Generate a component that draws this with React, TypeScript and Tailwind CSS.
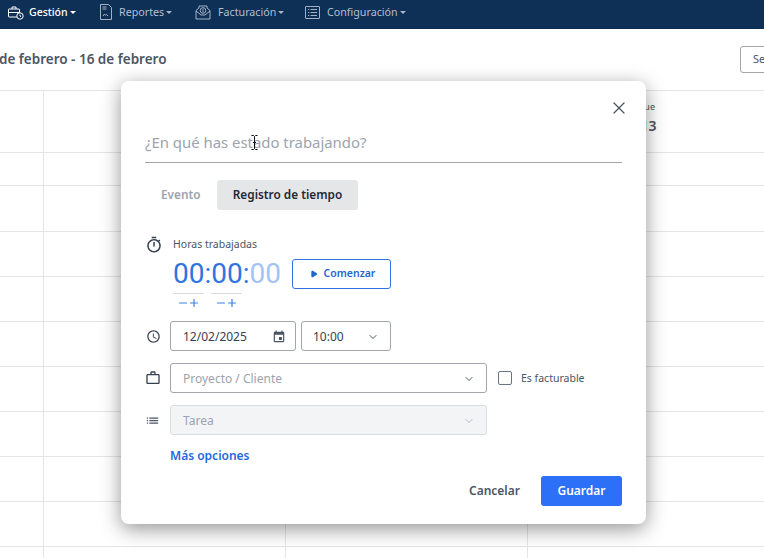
import React from 'react';
import { X, Play, ChevronDown, Plus, Minus } from 'lucide-react';
import { MdOutlineTimer, MdAccessTime, MdWorkOutline, MdList, MdEvent } from 'react-icons/md';

const FONT = "font-['Noto_Sans','Open_Sans',sans-serif]";
const ROW_HEIGHTS = [33, 46, 45, 45, 45, 45, 45, 45, 45, 12];

function NavCaret({ light }: { light?: boolean }) {
  return (
    <span
      className={`ml-[2px] h-0 w-0 border-x-[3px] border-t-[3px] border-x-transparent ${light ? 'border-t-white' : 'border-t-[#a9b6c8]'}`}
    />
  );
}

function GestionIcon() {
  return (
    <svg width="16" height="14" viewBox="0 0 16 14" fill="none" stroke="currentColor" strokeWidth="1">
      <rect x="0.5" y="3" width="11" height="8" rx="0.5" />
      <path d="M4 3V1h4v2M0.5 6.5h11" />
      <circle cx="12" cy="10" r="3.2" fill="#0e2f56" />
      <path d="M12 8.5V10l1 .7" />
    </svg>
  );
}

function ReportIcon() {
  return (
    <svg width="12" height="16" viewBox="0 0 12 16" fill="none" stroke="currentColor" strokeWidth="0.9">
      <path d="M.5.5h8l3 3v12H.5z" />
      <path d="M2.5 3h4M2.5 5h4M3 12l1.5-2 1 1.2 1-.6 1.5 1.4" />
    </svg>
  );
}

function BillingIcon() {
  return (
    <svg width="16" height="16" viewBox="0 0 16 16" fill="none" stroke="currentColor" strokeWidth="0.9">
      <path d="M1 6.5 4 4V2h8v2l3 2.5V15H1z" />
      <path d="M1 7l5 4h4l5-4" />
      <circle cx="8" cy="6.5" r="2.8" />
      <path d="M8 4.8v3.4" />
    </svg>
  );
}

function ConfigIcon() {
  return (
    <svg width="15" height="13" viewBox="0 0 15 13" fill="none" stroke="currentColor" strokeWidth="0.9">
      <rect x="0.5" y="0.5" width="14" height="12" rx="0.5" />
      <path d="M3 3.5h1.2M3 6.5h1.2M3 9.5h1.2M5.5 3.5H12M5.5 6.5H12M5.5 9.5H12" />
    </svg>
  );
}

function NavItem({ icon, label, active, className }: { icon: React.ReactNode; label: string; active?: boolean; className: string }) {
  return (
    <div className={`flex items-center ${active ? 'font-medium text-white' : 'text-[#b4bfce]'} ${className}`}>
      {icon}
      <span className={active ? 'ml-[5px] text-[10.5px]' : 'ml-[7px] text-[10.7px]'}>{label}</span>
      <NavCaret light={active} />
    </div>
  );
}

function CalendarGrid() {
  return (
    <div className="border-t border-[#e4e5e8]">
      {/* Header row, only the last day shows past the modal */}
      <div className="grid h-[62px] grid-cols-[44px_242px_242px_242px] border-b border-[#e4e5e8]">
        <div className="border-r border-[#e4e5e8]" />
        <div className="border-r border-[#e4e5e8]" />
        <div className="border-r border-[#e4e5e8]" />
        <div className="flex flex-col items-center border-r border-[#e4e5e8] pt-[10px] text-[#4b5563]">
          <span className="text-[9px] leading-[12px]">jue</span>
          <span className="mt-[4px] text-[14px] font-semibold leading-[18px]">13</span>
        </div>
      </div>
      {ROW_HEIGHTS.map((height, i) => (
        <div
          key={i}
          className="grid grid-cols-[44px_242px_242px_242px] border-b border-[#e4e5e8]"
          style={{ height }}
        >
          <div className="border-r border-[#e4e5e8]" />
          <div className="border-r border-[#e4e5e8]" />
          <div className="border-r border-[#e4e5e8]" />
          <div className="border-r border-[#e4e5e8]" />
        </div>
      ))}
    </div>
  );
}

function Stepper() {
  return (
    <div className="flex h-[17px] w-[31px] flex-col items-center border-t border-[#d9dce1] pt-[3px]">
      <div className="flex items-center text-[#3b82e6]">
        <Minus size={12} strokeWidth={2.4} className="mr-[-1px]" />
        <Plus size={12} strokeWidth={2.4} />
      </div>
    </div>
  );
}

function TimeEntryModal() {
  return (
    <div className="absolute left-[121px] top-[81px] flex h-[443px] w-[525px] flex-col rounded-[8px] bg-white px-[24px] shadow-[0_5px_20px_rgba(0,0,0,0.42)]">
      <div className="flex h-[49px] justify-end pt-[17px]">
        <X size={20} className="mr-[-7px] text-[#4b5563]" strokeWidth={1.5} />
      </div>

      {/* Description */}
      <div className="flex h-[33px] items-center border-b border-[#a3a6ad] pb-[7px] text-[14.9px] text-[#9ca3af]">
        ¿En qué has estado trabajando?
      </div>

      {/* Tabs */}
      <div className="mt-[17px] flex items-center text-[11.8px] font-semibold">
        <div className="w-[72px] pl-[16px] text-[#9ca3af]">Evento</div>
        <div className="flex h-[30px] w-[141px] items-center justify-center rounded-[3px] bg-[#e5e6e8] text-[#1f2937]">
          Registro de tiempo
        </div>
      </div>

      {/* Hours worked */}
      <div className="mt-[26px] flex">
        <div className="w-[25px]">
          <MdOutlineTimer size={18} className="text-[#374151]" />
        </div>
        <div className="ml-[3px]">
          <div className="text-[10.5px] leading-[16px] text-[#4b5563]">Horas trabajadas</div>
          <div className="mt-[7px] flex items-center">
            <div className="w-[119px] font-['Roboto',sans-serif] text-[28px] leading-[30px] text-[#2f74e0]">
              00:00:<span className="text-[#a3c4f3]">00</span>
            </div>
            <button className="flex h-[30px] w-[99px] items-center justify-center gap-[6px] rounded-[3px] border border-[#2f74e0] pl-[2px] text-[10.5px] font-semibold text-[#1f66d1]">
              <Play size={8} fill="currentColor" />
              Comenzar
            </button>
          </div>
          <div className="mt-[4px] flex gap-[7px]">
            <Stepper />
            <Stepper />
          </div>
        </div>
      </div>

      {/* Date and time */}
      <div className="mt-[11px] flex items-center">
        <div className="w-[25px]">
          <MdAccessTime size={15} className="ml-[1px] text-[#374151]" />
        </div>
        <div className="flex h-[30px] w-[126px] items-center justify-between rounded-[3px] border border-[#a3a6ad] pl-[12px] pr-[9px] pt-[1px] text-[12px] text-[#374151]">
          12/02/2025
          <MdEvent size={14} className="text-[#4b5563]" />
        </div>
        <div className="ml-[5px] flex h-[30px] w-[90px] items-center justify-between rounded-[3px] border border-[#a3a6ad] pl-[11px] pr-[11px] pt-[1px] text-[12px] text-[#374151]">
          10:00
          <ChevronDown size={12} strokeWidth={2} className="text-[#4b5563]" />
        </div>
      </div>

      {/* Project */}
      <div className="mt-[12px] flex items-center">
        <div className="w-[25px]">
          <MdWorkOutline size={16} className="text-[#374151]" />
        </div>
        <div className="flex h-[30px] w-[317px] items-center justify-between rounded-[3px] border border-[#a3a6ad] pl-[12px] pr-[11px] pt-[1px] text-[12px] text-[#9ca3af]">
          Proyecto / Cliente
          <ChevronDown size={12} strokeWidth={2} className="text-[#4b5563]" />
        </div>
        <div className="ml-[11px] h-[14px] w-[14px] rounded-[2px] border border-[#6b7280]" />
        <div className="ml-[9px] pt-[1px] text-[10.5px] text-[#4b5563]">Es facturable</div>
      </div>

      {/* Task */}
      <div className="mt-[12px] flex items-center">
        <div className="w-[25px]">
          <MdList size={15} className="text-[#4b5563]" />
        </div>
        <div className="flex h-[30px] w-[317px] items-center justify-between rounded-[3px] border border-[#d9dce1] bg-[#f3f4f5] pl-[12px] pr-[11px] pt-[1px] text-[12px] text-[#9ca3af]">
          Tarea
          <ChevronDown size={12} strokeWidth={2} className="text-[#b6bac1]" />
        </div>
      </div>

      <div className="ml-[25px] mt-[12px] text-[12px] font-semibold leading-[17px] text-[#1f69e0]">Más opciones</div>

      {/* Footer */}
      <div className="mt-[12px] flex items-center justify-end">
        <button className="mr-[21px] text-[12px] font-semibold text-[#4b5563]">Cancelar</button>
        <button className="h-[30px] w-[81px] rounded-[3px] bg-[#2b70f7] text-[12px] font-semibold text-white">Guardar</button>
      </div>
    </div>
  );
}

export default function App() {
  return (
    <div className={`relative h-[558px] w-[764px] overflow-hidden bg-white ${FONT}`}>
      <nav className="flex h-[29px] items-center bg-[#0e2f56] pb-[4px] pl-[8px]">
        <NavItem icon={<GestionIcon />} label="Gestión" active className="w-[92px]" />
        <NavItem icon={<ReportIcon />} label="Reportes" className="w-[95px]" />
        <NavItem icon={<BillingIcon />} label="Facturación" className="w-[110px]" />
        <NavItem icon={<ConfigIcon />} label="Configuración" className="w-[110px]" />
      </nav>

      <div className="flex h-[61px] items-center justify-between">
        <div className="ml-[-20px] text-[13.5px] font-semibold text-[#4b5563]">10 de febrero - 16 de febrero</div>
        <div className="mr-[-40px] flex h-[27px] w-[64px] items-center rounded-[3px] border border-[#a3a6ad] pl-[12px] text-[11px] text-[#4b5563]">
          Semana
        </div>
      </div>

      <CalendarGrid />
      <TimeEntryModal />

      {/* Text cursor caught in the screenshot */}
      <svg className="absolute left-[251px] top-[135px]" width="7" height="15" viewBox="0 0 7 15" fill="none" stroke="#111" strokeWidth="1">
        <path d="M0.5.5h2l1 1 1-1h2M3.5 1.5v12M0.5 14.5h2l1-1 1 1h2M2 7.5h3" />
      </svg>
    </div>
  );
}
